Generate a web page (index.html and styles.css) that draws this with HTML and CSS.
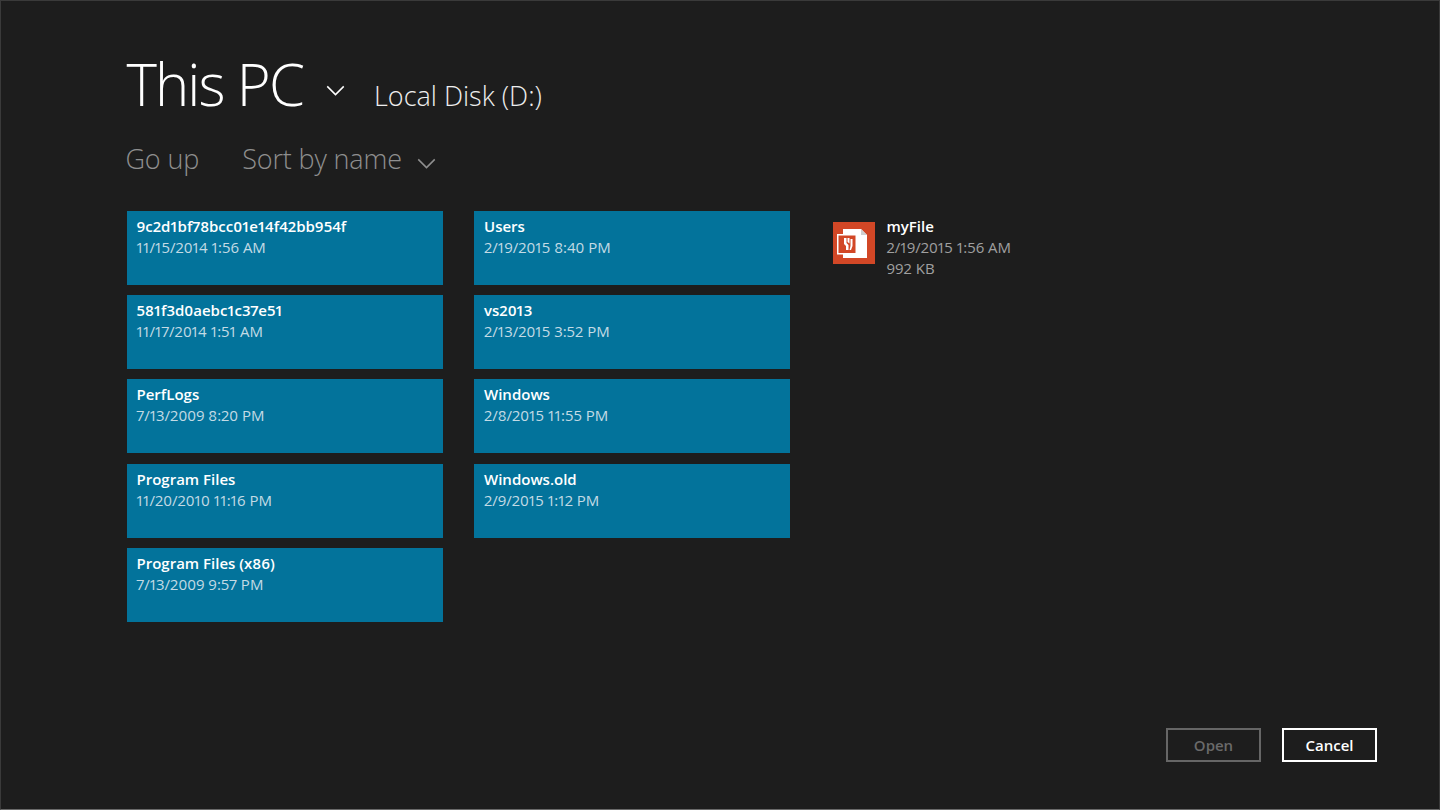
FILE: index.html
```html
<!DOCTYPE html>
<html lang="en">
<head>
<meta charset="utf-8">
<title>This PC</title>
<link rel="stylesheet" href="styles.css">
</head>
<body>
<main class="picker">
  <header class="head">
    <h1 class="title">This PC</h1>
    <svg class="chev chev-title" viewBox="0 0 20 12"><path d="M1 1.5 L10 10.5 L19 1.5"/></svg>
    <span class="path">Local Disk (D:)</span>
  </header>
  <nav class="tools">
    <span class="tool">Go up</span>
    <span class="tool sort">Sort by name</span>
    <svg class="chev chev-sort" viewBox="0 0 20 12"><path d="M1 1.5 L10 10.5 L19 1.5"/></svg>
  </nav>
  <section class="grid">
    <div class="tile"><b>9c2d1bf78bcc01e14f42bb954f</b><span>11/15/2014 1:56 AM</span></div>
    <div class="tile"><b>581f3d0aebc1c37e51</b><span>11/17/2014 1:51 AM</span></div>
    <div class="tile"><b>PerfLogs</b><span>7/13/2009 8:20 PM</span></div>
    <div class="tile"><b>Program Files</b><span>11/20/2010 11:16 PM</span></div>
    <div class="tile"><b>Program Files (x86)</b><span>7/13/2009 9:57 PM</span></div>
    <div class="tile"><b>Users</b><span>2/19/2015 8:40 PM</span></div>
    <div class="tile"><b>vs2013</b><span>2/13/2015 3:52 PM</span></div>
    <div class="tile"><b>Windows</b><span>2/8/2015 11:55 PM</span></div>
    <div class="tile"><b>Windows.old</b><span>2/9/2015 1:12 PM</span></div>
    <div class="file">
      <svg class="file-icon" viewBox="0 0 42 42">
        <rect width="42" height="42" fill="#d24726"/>
        <path d="M10 7H28L34 13V36H10Z" fill="#fff"/>
        <path d="M28 7V13H34Z" fill="#cfcfcf"/>
        <rect x="4.750" y="12.750" width="18.500" height="19" fill="#d24726" stroke="#fff" stroke-width="1.500"/>
        <path d="M11 16V22L13 24V28H15.500V23L13.500 21V16ZM14.500 16V20L16.500 21.500V16ZM17.500 17V24L16.500 28H18L19.500 24V17Z" fill="#fff"/>
      </svg>
      <div class="file-info"><b>myFile</b><span>2/19/2015 1:56 AM</span><span>992 KB</span></div>
    </div>
  </section>
  <footer class="actions">
    <button class="btn btn-off" type="button">Open</button>
    <button class="btn" type="button">Cancel</button>
  </footer>
</main>
</body>
</html>
```
FILE: styles.css
```css
* { box-sizing: border-box; }
html, body { margin: 0; height: 100%; }
body {
  background: #1d1d1d;
  color: #fff;
  font-family: "Open Sans", "Noto Sans", sans-serif;
  font-variant-numeric: proportional-nums;
  overflow: hidden;
}
.picker {
  height: 810px;
  padding: 0 63px 0 125.500px;
  border: 1px solid #3a3a3a;
  border-bottom-color: #6a6a6a;
  display: flex;
  flex-direction: column;
  position: relative;
}
.head { display: flex; align-items: baseline; height: 113px; padding-top: 47px; }
.title { margin: 0; font-size: 58px; font-weight: 300; line-height: 72px; letter-spacing: -1.900px; }
.chev { fill: none; stroke: currentColor; stroke-width: 1.600; }
.chev-title { width: 19px; height: 11px; margin-left: 23px; margin-top: 37px; align-self: flex-start; }
.path { margin-left: 29px; font-size: 27px; font-weight: 300; color: #eee; }
.tools { display: flex; align-items: baseline; height: 96.900px; padding-top: 23px; margin-left: -1px; color: #8f8f8f; }
.tool { font-size: 27px; font-weight: 300; letter-spacing: -.150px; line-height: 44px; }
.sort { margin-left: 43px; }
.chev-sort { width: 19px; height: 11px; margin-left: 15px; }
.grid {
  display: grid;
  grid-auto-flow: column;
  grid-template-rows: repeat(5, 74px);
  grid-template-columns: 316px 316px 300px;
  column-gap: 31.500px;
  row-gap: 10.250px;
}
.tile {
  background: #03739b;
  padding: 5px 10px;
  display: flex;
  flex-direction: column;
  font-size: 15px;
  line-height: 21px;
}
.tile b { font-weight: 600; }
.tile span { color: #c3dbe5; }
.file { display: flex; padding: 5px 0 0 11px; grid-row: 1; }
.file-icon { width: 42px; height: 42px; margin-top: 6px; flex: none; }
.file-info { display: flex; flex-direction: column; margin-left: 12px; font-size: 15px; line-height: 21px; }
.file-info b { font-weight: 600; }
.file-info span { color: #a0a0a0; }
.actions {
  position: absolute;
  right: 62px;
  bottom: 47px;
  display: flex;
  gap: 21px;
}
.btn {
  width: 95px;
  height: 34px;
  background: transparent;
  border: 2px solid #fff;
  color: #fff;
  font: 600 15px "Open Sans", "Noto Sans", sans-serif;
  padding: 0;
}
.btn-off { border-color: #666; color: #6a6a6a; }
```
